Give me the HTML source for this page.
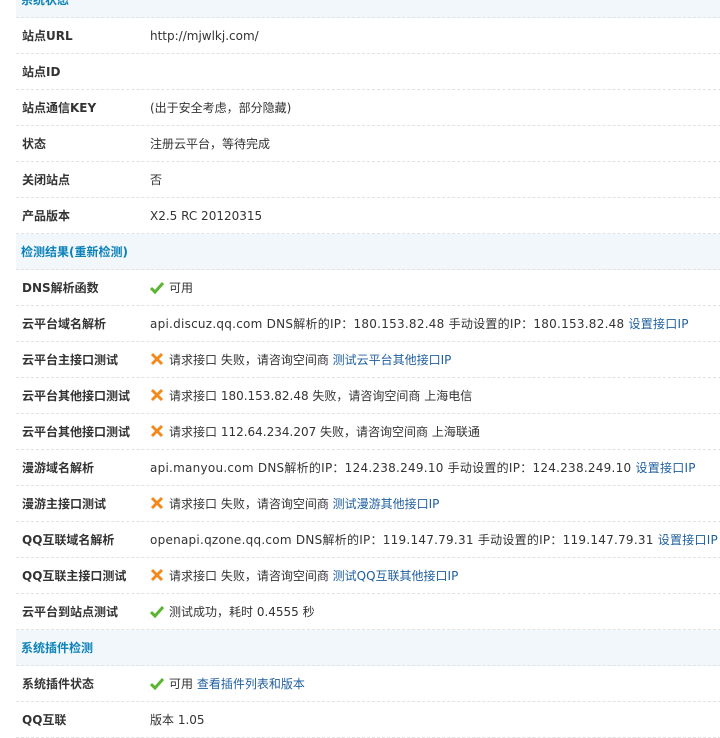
<!DOCTYPE html>
<html><head><meta charset="utf-8"><style>
body{margin:0;background:#fff;font:12px "DejaVu Sans","Noto Sans CJK SC",sans-serif;color:#333;overflow:hidden;width:720px;height:731px;position:relative}
.t{position:absolute;left:16px;top:-18px;width:720px}
.r{height:35px;border-bottom:1px dashed #e2e2e2;position:relative;line-height:36px;white-space:nowrap}
.h{background:#f2f7fc;color:#0b82b8;font-weight:bold;padding-left:5px}
.l{position:absolute;left:6px;font-weight:bold;color:#333}
.v{position:absolute;left:134px}
.c{letter-spacing:0.25px}
a{color:#1f5f9f;text-decoration:none}
.i{display:inline-block;width:14px;height:14px;vertical-align:-2px;margin-right:5px}
</style></head><body><div class="t">
<div class="r h">系统状态</div>
<div class="r"><span class="l">站点URL</span><span class="v">http://mjwlkj.com/</span></div>
<div class="r"><span class="l">站点ID</span></div>
<div class="r"><span class="l">站点通信KEY</span><span class="v">(出于安全考虑，部分隐藏)</span></div>
<div class="r"><span class="l">状态</span><span class="v">注册云平台，等待完成</span></div>
<div class="r"><span class="l">关闭站点</span><span class="v">否</span></div>
<div class="r"><span class="l">产品版本</span><span class="v">X2.5 RC 20120315</span></div>
<div class="r h">检测结果(重新检测)</div>
<div class="r"><span class="l">DNS解析函数</span><span class="v"><svg class="i" viewBox="0 0 14 14"><path d="M1 8l4 4 8-9" stroke="#5bb530" stroke-width="3" fill="none"/></svg>可用</span></div>
<div class="r"><span class="l">云平台域名解析</span><span class="v c">api.discuz.qq.com DNS解析的IP：180.153.82.48 手动设置的IP：180.153.82.48 <a>设置接口IP</a></span></div>
<div class="r"><span class="l">云平台主接口测试</span><span class="v"><svg class="i" viewBox="0 0 14 14"><path d="M2 2l10 10M12 2L2 12" stroke="#f08a1c" stroke-width="3"/></svg>请求接口 失败，请咨询空间商 <a>测试云平台其他接口IP</a></span></div>
<div class="r"><span class="l">云平台其他接口测试</span><span class="v"><svg class="i" viewBox="0 0 14 14"><path d="M2 2l10 10M12 2L2 12" stroke="#f08a1c" stroke-width="3"/></svg>请求接口 180.153.82.48 失败，请咨询空间商 上海电信</span></div>
<div class="r"><span class="l">云平台其他接口测试</span><span class="v"><svg class="i" viewBox="0 0 14 14"><path d="M2 2l10 10M12 2L2 12" stroke="#f08a1c" stroke-width="3"/></svg>请求接口 112.64.234.207 失败，请咨询空间商 上海联通</span></div>
<div class="r"><span class="l">漫游域名解析</span><span class="v c">api.manyou.com DNS解析的IP：124.238.249.10 手动设置的IP：124.238.249.10 <a>设置接口IP</a></span></div>
<div class="r"><span class="l">漫游主接口测试</span><span class="v"><svg class="i" viewBox="0 0 14 14"><path d="M2 2l10 10M12 2L2 12" stroke="#f08a1c" stroke-width="3"/></svg>请求接口 失败，请咨询空间商 <a>测试漫游其他接口IP</a></span></div>
<div class="r"><span class="l">QQ互联域名解析</span><span class="v c">openapi.qzone.qq.com DNS解析的IP：119.147.79.31 手动设置的IP：119.147.79.31 <a>设置接口IP</a></span></div>
<div class="r"><span class="l">QQ互联主接口测试</span><span class="v"><svg class="i" viewBox="0 0 14 14"><path d="M2 2l10 10M12 2L2 12" stroke="#f08a1c" stroke-width="3"/></svg>请求接口 失败，请咨询空间商 <a>测试QQ互联其他接口IP</a></span></div>
<div class="r"><span class="l">云平台到站点测试</span><span class="v"><svg class="i" viewBox="0 0 14 14"><path d="M1 8l4 4 8-9" stroke="#5bb530" stroke-width="3" fill="none"/></svg>测试成功，耗时 0.4555 秒</span></div>
<div class="r h">系统插件检测</div>
<div class="r"><span class="l">系统插件状态</span><span class="v"><svg class="i" viewBox="0 0 14 14"><path d="M1 8l4 4 8-9" stroke="#5bb530" stroke-width="3" fill="none"/></svg>可用 <a>查看插件列表和版本</a></span></div>
<div class="r"><span class="l">QQ互联</span><span class="v">版本 1.05</span></div>
</div></body></html>
